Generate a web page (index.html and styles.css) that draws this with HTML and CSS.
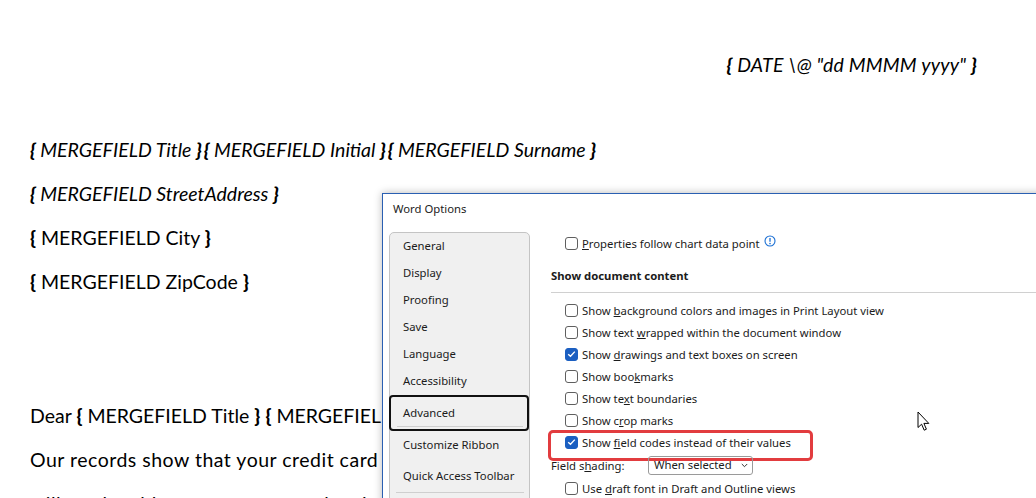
FILE: index.html
```html
<!DOCTYPE html>
<html>
<head>
<meta charset="utf-8">
<link rel="stylesheet" href="styles.css">
</head>
<body>
<div class="doc">
  <p class="date it"><b>{</b> DATE \@ "dd MMMM yyyy" <b>}</b></p>
  <p class="line first it"><b>{</b> MERGEFIELD Title <b>}</b><b class="gap">{</b> MERGEFIELD Initial <b>}</b><b class="gap">{</b> MERGEFIELD Surname <b>}</b></p>
  <p class="line it"><b>{</b> MERGEFIELD StreetAddress <b>}</b></p>
  <p class="line"><b>{</b> MERGEFIELD City <b>}</b></p>
  <p class="line"><b>{</b> MERGEFIELD ZipCode <b>}</b></p>
  <p class="line dear">Dear <b>{</b> MERGEFIELD Title <b>}</b> <b>{</b> MERGEFIELD Initial <b>}</b></p>
  <p class="line prose">Our records show that your credit card has expired and we</p>
  <p class="line prose">will not be able to renew your subscription until</p>
</div>

<div class="dialog">
  <div class="title">Word Options</div>
  <div class="body">
    <div class="nav">
      <div class="nav-item">General</div>
      <div class="nav-item">Display</div>
      <div class="nav-item">Proofing</div>
      <div class="nav-item">Save</div>
      <div class="nav-item">Language</div>
      <div class="nav-item">Accessibility</div>
      <div class="nav-item selected">Advanced<span class="sep-in"></span></div>
      <div class="nav-item cr">Customize Ribbon</div>
      <div class="nav-item qat">Quick Access Toolbar</div>
      <div class="nav-sep"></div>
    </div>
    <div class="pane">
      <div class="row"><span class="cb"></span><span><u>P</u>roperties follow chart data point</span>
        <svg class="info" width="12" height="12" viewBox="0 0 12 12"><circle cx="6" cy="6" r="5" fill="none" stroke="#1a6fd4" stroke-width="1.1"/><line x1="6" y1="3" x2="6" y2="6.8" stroke="#1a6fd4" stroke-width="1.3"/><circle cx="6" cy="8.6" r="0.8" fill="#1a6fd4"/></svg>
      </div>
      <div class="heading">Show document content</div>
      <div class="hr"></div>
      <div class="row"><span class="cb"></span><span>Show <u>b</u>ackground colors and images in Print Layout view</span></div>
      <div class="row"><span class="cb"></span><span>Show text <u>w</u>rapped within the document window</span></div>
      <div class="row"><span class="cb checked"><svg width="9" height="8" viewBox="0 0 9 8"><path d="M1.2 4.2 L3.5 6.3 L7.8 1.6" fill="none" stroke="#fff" stroke-width="1.4"/></svg></span><span>Show <u>d</u>rawings and text boxes on screen</span></div>
      <div class="row"><span class="cb"></span><span>Show boo<u>k</u>marks</span></div>
      <div class="row"><span class="cb"></span><span>Show te<u>x</u>t boundaries</span></div>
      <div class="row"><span class="cb"></span><span>Show c<u>r</u>op marks</span></div>
      <div class="row hl-row"><span class="cb checked"><svg width="9" height="8" viewBox="0 0 9 8"><path d="M1.2 4.2 L3.5 6.3 L7.8 1.6" fill="none" stroke="#fff" stroke-width="1.4"/></svg></span><span>Show <u>f</u>ield codes instead of their values</span><span class="highlight"></span></div>
      <div class="row shading"><span class="lbl">Field s<u>h</u>ading:</span><span class="select">When selected<svg class="chev" width="7" height="5" viewBox="0 0 7 5"><path d="M0.8 1 L3.5 3.7 L6.2 1" fill="none" stroke="#333" stroke-width="1"/></svg></span></div>
      <div class="row"><span class="cb"></span><span>Use <u>d</u>raft font in Draft and Outline views</span></div>
    </div>
  </div>
</div>

<svg class="cursor" width="14" height="21" viewBox="0 0 14 21"><path d="M1 1 L1 16.5 L4.6 13.2 L7.2 19.2 L9.4 18.2 L6.9 12.4 L11.8 12.4 Z" fill="#fff" stroke="#000" stroke-width="1" stroke-linejoin="round"/></svg>
</body>
</html>
```

FILE: styles.css
```css
html, body {
  margin: 0;
  padding: 0;
  background: #ffffff;
  overflow: hidden;
}
body {
  width: 1036px;
  height: 498px;
  position: relative;
}
.doc {
  padding: 43px 0 0 30px;
  font-family: Lato, "Liberation Sans", sans-serif;
  font-size: 19.5px;
  color: #000;
}
.doc p {
  margin: 0;
  line-height: 44px;
  height: 44px;
  white-space: nowrap;
}
.doc .it { font-style: italic; }
.doc b { font-weight: 900; }
.doc b.gap { margin-left: 2px; }
.doc .date {
  text-align: right;
  padding-right: 59px;
  letter-spacing: 0.2px;
}
.doc .first { margin-top: 41px; }
.doc .dear { margin-top: 90px; }
.doc .prose { letter-spacing: 0.5px; }

.dialog {
  position: absolute;
  left: 382px;
  top: 193px;
  width: 720px;
  height: 360px;
  background: #fff;
  border-top: 1px solid #2a5fb2;
  border-left: 1px solid #2a5fb2;
  box-shadow: 0 0 8px rgba(0,0,0,0.28);
  font-family: "Noto Sans", "Segoe UI", sans-serif;
  font-size: 11.3px;
  color: #1b1b1b;
}
.title {
  height: 38px;
  line-height: 30px;
  padding-left: 10px;
  color: #222;
}
.body {
  display: flex;
  gap: 21px;
}
.nav {
  margin-left: 6px;
  width: 141px;
  height: 300px;
  background: #f0f0f0;
  border: 1px solid #c4c4c4;
  border-radius: 5px;
  padding: 0;
  box-sizing: border-box;
}
.nav-item {
  height: 27px;
  line-height: 26px;
  padding-left: 13px;
  position: relative;
}
.nav-item.selected {
  width: 140px;
  height: 36px;
  line-height: 32px;
  box-sizing: border-box;
  border: 2px solid #111;
  border-radius: 4px;
  padding-left: 12px;
  margin-left: -1px;
}
.sep-in {
  position: absolute;
  left: 6px;
  right: 4px;
  bottom: 2px;
  height: 1px;
  background: #cfcfcf;
}
.nav-item.cr { height: 28px; line-height: 28px; }
.nav-item.qat { height: 33px; line-height: 33px; }
.nav-sep {
  margin: 0 5px 0 6px;
  height: 1px;
  background: #cfcfcf;
}
.pane {
  flex: 1;
  padding-top: 0;
}
.row {
  height: 22px;
  display: flex;
  align-items: center;
  padding-left: 14px;
  white-space: nowrap;
  position: relative;
}
.cb {
  width: 13px;
  height: 13px;
  box-sizing: border-box;
  border: 1px solid #5f5f5f;
  border-radius: 3px;
  margin-right: 4px;
  display: flex;
  align-items: center;
  justify-content: center;
  background: #fff;
}
.cb.checked {
  background: #1b5fc1;
  border-color: #1b5fc1;
}
.info {
  margin-left: 4px;
  margin-top: -4px;
}
.heading {
  margin-top: 11px;
  height: 22px;
  line-height: 22px;
  font-weight: bold;
}
.hr {
  margin-top: 5px;
  height: 1px;
  background: #d0d0d0;
  margin-bottom: 6px;
}
.highlight {
  position: absolute;
  left: -3px;
  top: -1px;
  width: 265px;
  height: 31px;
  box-sizing: border-box;
  border: 3px solid #e23c3f;
  border-radius: 5px;
}
.row.shading {
  padding-left: 0;
  height: 24px;
}
.lbl {
  width: 97px;
}
.select {
  position: relative;
  width: 105px;
  height: 19px;
  box-sizing: border-box;
  border: 1px solid #9a9a9a;
  border-radius: 3px;
  padding-left: 5px;
  line-height: 16px;
  display: flex;
  align-items: center;
}
.chev {
  position: absolute;
  right: 4px;
  top: 6px;
}
.cursor {
  position: absolute;
  left: 917px;
  top: 411px;
}
```
